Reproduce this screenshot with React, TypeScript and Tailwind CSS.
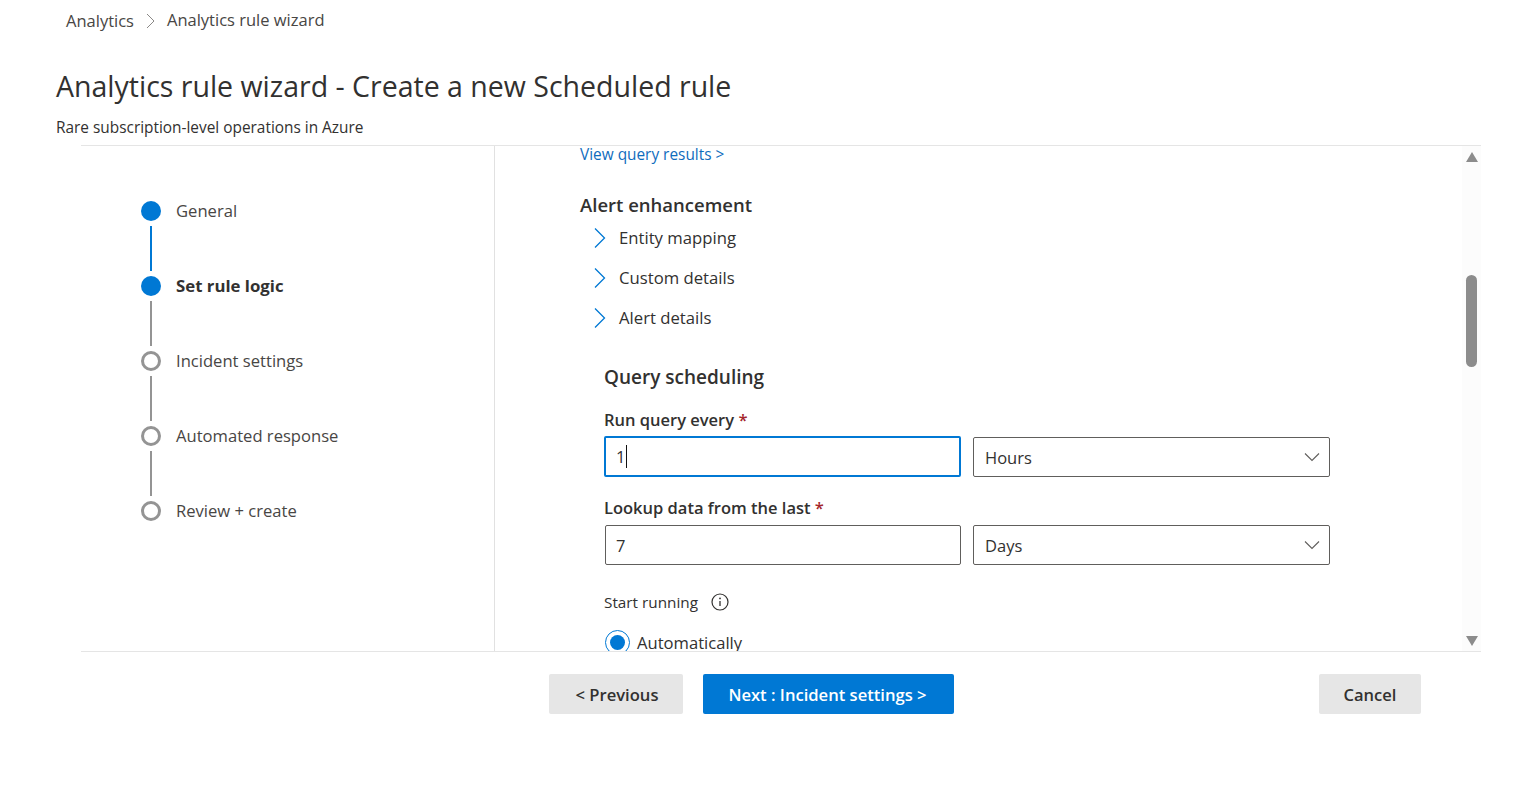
import React from "react";

const steps = [
  { label: "General", done: true, line: "bg-[#0078d4]" },
  { label: "Set rule logic", done: true, active: true, line: "bg-[#949494]" },
  { label: "Incident settings", line: "bg-[#949494]" },
  { label: "Automated response", line: "bg-[#949494]" },
  { label: "Review + create" },
];

const Chevron = () => (
  <svg width="14" height="22" viewBox="0 0 14 22" fill="none" className="shrink-0">
    <path d="M2 1.5l9.5 9.5L2 20.5" stroke="#0078d4" strokeWidth="1.3" />
  </svg>
);

const Caret = () => (
  <svg width="16" height="10" viewBox="0 0 16 10" fill="none" className="shrink-0">
    <path d="M1 1.5l7 7 7-7" stroke="#605e5c" strokeWidth="1.1" />
  </svg>
);

const Field = ({ label, value, unit, focused }: { label: string; value: string; unit: string; focused?: boolean }) => (
  <div>
    <div className="h-[24px] text-[16.5px] leading-[24px] font-semibold text-[#323130]">
      {label} <span className="text-[#a4262c]">*</span>
    </div>
    <div className="mt-[5px] flex gap-[12px] pl-px">
      <div
        className={
          focused
            ? "-mt-px -ml-px flex h-[41px] w-[357px] items-center rounded-[2px] border-2 border-[#0078d4] pt-[2px] pl-[10px] text-[16.5px] text-[#323130]"
            : "flex h-[40px] w-[356px] items-center rounded-[2px] border border-[#605e5c] pt-[2px] pl-[10px] text-[16.5px] text-[#323130]"
        }
      >
        {value}
        {focused && <span className="-mt-[2px] ml-px h-[23px] w-px bg-[#111]" />}
      </div>
      <div className="flex h-[40px] w-[357px] items-center justify-between rounded-[2px] border border-[#605e5c] pr-[9px] pl-[11px] text-[16.5px] text-[#323130]">
        <span className="pt-[2px]">{unit}</span>
        <Caret />
      </div>
    </div>
  </div>
);

export default function App() {
  return (
    <div className="h-[792px] bg-white font-['Open_Sans',sans-serif] text-[#323130]">
      <div className="flex h-[42px] items-center pl-[66px] text-[16.5px] text-[#484644]">
        <span className="mt-px">Analytics</span>
        <svg width="10" height="16" viewBox="0 0 10 16" fill="none" className="mr-[11px] ml-[12px]">
          <path d="M1 1l7 7-7 7" stroke="#8a8886" strokeWidth="1" />
        </svg>
        <span className="-mt-px">Analytics rule wizard</span>
      </div>

      <h1 className="mt-[23px] ml-[56px] h-[42px] text-[28.5px] leading-[42px] text-[#323130]">
        Analytics rule wizard - Create a new Scheduled rule
      </h1>
      <p className="mt-[10px] ml-[56px] h-[22px] text-[15.4px] leading-[22px] text-[#323130]">
        Rare subscription-level operations in Azure
      </p>

      <div className="mt-[6px] ml-[81px] flex h-[507px] w-[1400px] border-y border-[#e5e5e5]">
        <div className="w-[414px] shrink-0 border-r border-[#e1e1e1] pt-[55px] pl-[60px]">
          {steps.map((s) => (
            <div key={s.label} className="flex gap-[15px]">
              <div className="flex w-[20px] flex-col items-center">
                <div
                  className={
                    s.done
                      ? "h-[20px] w-[20px] rounded-full bg-[#0078d4]"
                      : "h-[20px] w-[20px] rounded-full border-[3px] border-[#949494]"
                  }
                />
                {s.line && <div className={`mt-[5px] mb-[5px] h-[45px] w-[2px] ${s.line}`} />}
              </div>
              <div
                className={
                  s.active
                    ? "h-[20px] text-[16.8px] leading-[20px] font-bold text-[#323130]"
                    : "h-[20px] text-[16.6px] leading-[20px] text-[#484644]"
                }
              >
                {s.label}
              </div>
            </div>
          ))}
        </div>

        <div className="min-w-0 flex-1 overflow-hidden pl-[85px]">
          <div className="h-[18px] text-[15.4px] leading-[18px] text-[#0f6cbd]">View query results &gt;</div>
          <div className="mt-[27px] h-[28px] text-[18.5px] leading-[28px] font-semibold text-[#323130]">Alert enhancement</div>
          <div className="-mt-px flex flex-col pl-[13px]">
            {["Entity mapping", "Custom details", "Alert details"].map((t) => (
              <div key={t} className="flex h-[40px] items-center gap-[12px] text-[16.7px] text-[#323130]">
                <Chevron />
                {t}
              </div>
            ))}
          </div>
          <div className="ml-[24px]">
            <div className="mt-[24px] h-[30px] text-[19px] leading-[30px] font-semibold text-[#323130]">Query scheduling</div>
            <div className="mt-[16px]">
              <Field label="Run query every" value="1" unit="Hours" focused />
            </div>
            <div className="mt-[19px]">
              <Field label="Lookup data from the last" value="7" unit="Days" />
            </div>
            <div className="mt-[25px] flex h-[24px] items-center gap-[13px] text-[15.3px] text-[#323130]">
              Start running
              <svg width="18" height="18" viewBox="0 0 18 18" fill="none">
                <circle cx="9" cy="9" r="8" stroke="#323130" strokeWidth="1.2" />
                <path d="M9 8v5" stroke="#323130" strokeWidth="1.3" />
                <circle cx="9" cy="5.4" r="0.9" fill="#323130" />
              </svg>
            </div>
            <div className="mt-[16px] ml-px flex items-center gap-[7px] text-[16.6px] text-[#323130]">
              <div className="flex h-[25px] w-[25px] items-center justify-center rounded-full border border-[#0078d4]">
                <div className="h-[15px] w-[15px] rounded-full bg-[#0078d4]" />
              </div>
              <span className="pt-px">Automatically</span>
            </div>
          </div>
        </div>

        <div className="flex w-[19px] shrink-0 flex-col items-center justify-between bg-[#fcfcfc] pt-[6px] pb-[5px]">
          <div className="h-0 w-0 border-x-[6.5px] border-b-[10px] border-x-transparent border-b-[#8c8c8c]" />
          <div className="mt-[113px] mb-auto h-[92px] w-[11px] rounded-full bg-[#8c8c8c]" />
          <div className="h-0 w-0 border-x-[6.5px] border-t-[10px] border-x-transparent border-t-[#8c8c8c]" />
        </div>
      </div>

      <div className="mt-[22px] ml-[549px] flex w-[872px] gap-[20px]">
        <button className="h-[40px] w-[134px] rounded-[2px] bg-[#e6e6e6] pt-[2px] pl-[2px] text-[16.6px] font-semibold text-[#323130]">&lt; Previous</button>
        <button className="h-[40px] w-[251px] rounded-[2px] bg-[#0078d4] pt-[2px] pr-[2px] text-[16.6px] font-semibold text-white">Next : Incident settings &gt;</button>
        <button className="ml-auto h-[40px] w-[102px] rounded-[2px] bg-[#e6e6e6] pt-[2px] text-[16.5px] font-semibold text-[#323130]">Cancel</button>
      </div>
    </div>
  );
}
